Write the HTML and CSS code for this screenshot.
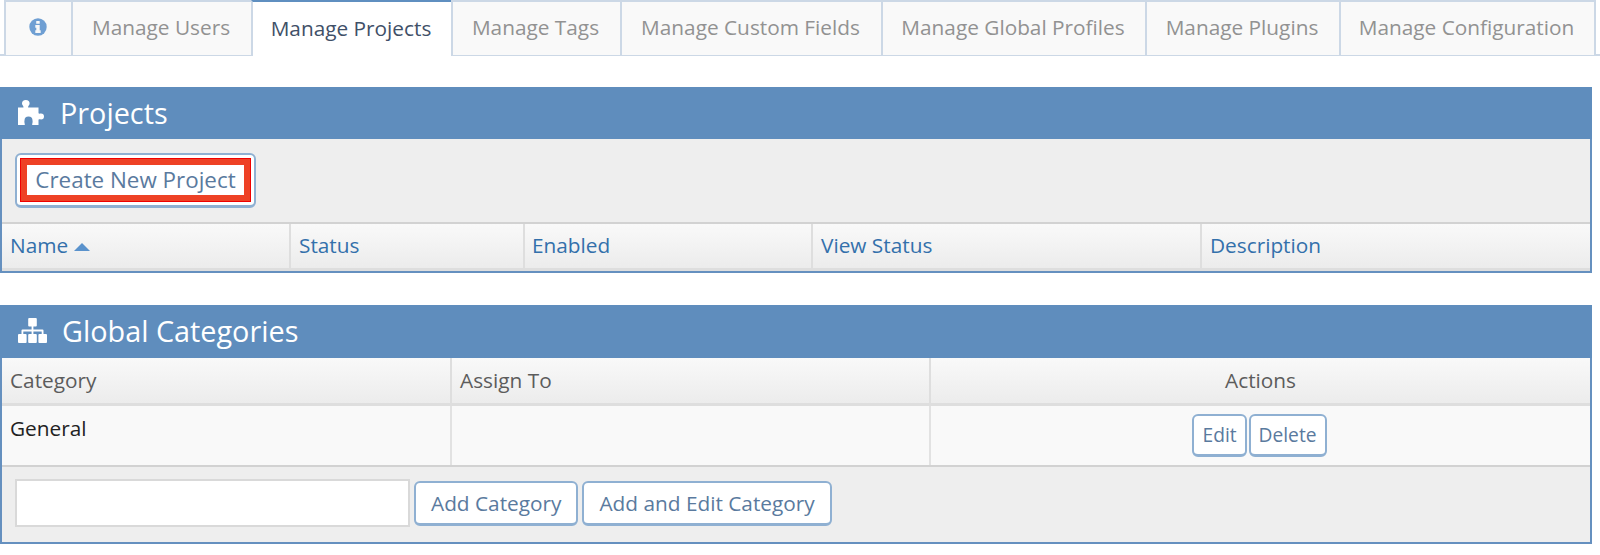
FILE: index.html
```html
<!DOCTYPE html>
<html lang="en">
<head>
<meta charset="utf-8">
<title>Manage Projects</title>
<link rel="stylesheet" href="styles.css">
</head>
<body>
<nav class="tabs">
  <a class="tab tab-info"><svg class="info-icon" viewBox="0 0 18 18"><circle cx="9" cy="9" r="8.7" fill="#6f9fd3"/><rect x="7.2" y="2.9" width="3.5" height="2.9" rx=".4" fill="#f8f8f8"/><path d="M6.3 7.1h4.4v5.2h1v2.6H6.3v-2.6h1V9.700h-1z" fill="#f8f8f8"/></svg></a>
  <a class="tab tab-users">Manage Users</a>
  <a class="tab tab-projects active">Manage Projects</a>
  <a class="tab tab-tags">Manage Tags</a>
  <a class="tab tab-fields">Manage Custom Fields</a>
  <a class="tab tab-profiles">Manage Global Profiles</a>
  <a class="tab tab-plugins">Manage Plugins</a>
  <a class="tab tab-config">Manage Configuration</a>
</nav>

<section class="panel panel-projects">
  <h2 class="panel-title"><svg class="puzzle-icon" viewBox="0 0 26 25"><path d="M0 7.500H5.500C5.800 6 4 5.200 4 3.500A3.800 3.500 0 1 1 11.600 3.500C11.600 5.200 9.800 6 10.100 7.500H20.500V13.200C21.300 14 22 13.500 23 13.500A3 3 0 1 1 23 19.500C22 19.500 21.300 19 20.500 19.800V25H14.200C14 23.500 15 22.500 14.500 20.500A4 4 0 0 0 6.500 20.500C6 22.500 7 23.500 6.800 25H0Z" fill="#fff"/></svg>Projects</h2>
  <div class="toolbar">
    <a class="btn btn-create"><span class="highlight"><span class="highlight-inner">Create New Project</span></span></a>
  </div>
  <table class="grid">
    <colgroup><col class="c-name"><col class="c-status"><col class="c-enabled"><col class="c-view"><col></colgroup>
    <thead>
      <tr class="head-row link-head">
        <th>Name <span class="sort-up"></span></th><th>Status</th><th>Enabled</th><th>View Status</th><th>Description</th>
      </tr>
    </thead>
  </table>
</section>

<section class="panel panel-categories">
  <h2 class="panel-title"><svg class="sitemap-icon" viewBox="0 0 29 25" fill="#fff"><rect x="10.200" width="8.600" height="8.500" rx="1"/><rect x="13.600" y="8" width="1.800" height="9"/><path d="M3.500 16.500V12.500a1 1 0 0 1 1-1h20a1 1 0 0 1 1 1v4h-1.800v-3H5.300v3z"/><rect y="16" width="8.600" height="9" rx="1"/><rect x="10.200" y="16" width="8.600" height="9" rx="1"/><rect x="20.400" y="16" width="8.600" height="9" rx="1"/></svg>Global Categories</h2>
  <table class="grid">
    <colgroup><col class="c-category"><col class="c-assign"><col></colgroup>
    <thead>
      <tr class="head-row">
        <th>Category</th><th>Assign To</th><th class="center">Actions</th>
      </tr>
    </thead>
    <tbody>
      <tr class="body-row">
        <td>General</td><td></td>
        <td class="center actions"><a class="btn btn-small">Edit</a><a class="btn btn-small">Delete</a></td>
      </tr>
    </tbody>
  </table>
  <form class="footer-bar">
    <input class="cat-input" type="text" aria-label="Category">
    <a class="btn btn-add">Add Category</a>
    <a class="btn btn-add">Add and Edit Category</a>
  </form>
</section>
</body>
</html>
```
FILE: styles.css
```css
* { box-sizing: border-box; }
html, body { margin: 0; padding: 0; background: #fff; }
body {
  width: 1600px;
  height: 555px;
  overflow: hidden;
  font-family: "Open Sans", "Noto Sans", sans-serif;
  font-size: 20.8px;
  color: #333;
}
.tabs {
  display: flex;
  height: 56px;
  padding-left: 4px;
  border-bottom: 2px solid #ccd8e6;
}
.tab {
  display: flex;
  align-items: center;
  justify-content: center;
  height: 55px;
  padding: 0 2px 3px 0;
  color: #929292;
  background: #f9f9f9;
  border: solid #ccd8e6;
  border-width: 2px 0 0 2px;
}
.tab-info { width: 67px; }
.tab-users { width: 180px; }
.tab-projects { width: 200px; }
.tab-tags { width: 169px; }
.tab-fields { width: 261px; }
.tab-profiles { width: 264px; }
.tab-plugins { width: 194px; }
.tab-config { width: 257px; border-right-width: 2px; }
.tab.active {
  height: 56px;
  color: #3f5068;
  background: #fff;
  border-top: 2px solid #5f8fc0;
  border-left-color: #ccd8e6;
}
.info-icon { width: 18px; height: 18px; }

.panel {
  width: 1592px;
  border: solid #6590bf;
  border-width: 0 2px 2px 2px;
}
.panel-projects { margin-top: 31px; }
.panel-categories { margin-top: 32px; }
.panel-title {
  display: flex;
  align-items: center;
  height: 52px;
  margin: 0 -2px;
  padding: 0 0 1px 18px;
  font-size: 28.800px;
  font-weight: 400;
  color: #fff;
  background: #5f8dbd;
}
.panel-categories .panel-title { height: 53px; }
.puzzle-icon { width: 26px; height: 25px; margin-right: 16px; }
.sitemap-icon { width: 29px; height: 25px; margin-right: 15px; }
.toolbar {
  display: flex;
  align-items: center;
  height: 83px;
  padding-left: 13px;
  background: #eee;
}
.btn {
  display: inline-flex;
  align-items: center;
  justify-content: center;
  color: #5a7a9e;
  background: #fff;
  border: 2px solid #8fb0d2;
  border-bottom-width: 3px;
  border-radius: 6px;
}
.btn-create {
  width: 241px;
  height: 55px;
  padding: 3px;
  font-size: 22.400px;
}
.highlight {
  display: flex;
  width: 100%;
  height: 100%;
  padding: 7px;
  background: #ee4125;
  box-shadow: inset 0 0 0 1px #f00000;
}
.highlight-inner {
  display: flex;
  align-items: center;
  justify-content: center;
  width: 100%;
  background: #fff;
  padding-bottom: 2px;
}
.grid {
  width: 100%;
  border-collapse: collapse;
  table-layout: fixed;
}
.c-name { width: 288px; }
.c-status { width: 234px; }
.c-enabled { width: 288px; }
.c-view { width: 389px; }
.c-category { width: 449px; }
.c-assign { width: 479px; }
.head-row th {
  height: 46px;
  padding: 0 0 1px 8px;
  font-size: 20.800px;
  font-weight: 400;
  text-align: left;
  color: #5c5c5c;
  background: linear-gradient(#f9f9f9, #ececec);
  border-top: 2px solid #d2d2d2;
  border-bottom: 3px solid #dedede;
  border-left: 2px solid #dedede;
}
.panel-categories .head-row th { border-top: 0; height: 47px; }
.head-row th:first-child { border-left: 0; }
.link-head th { color: #3370ab; }
.link-head th:nth-child(3) { padding-left: 7px; }
.head-row th.center { text-align: center; padding-left: 0; }
.center { text-align: center; }
.sort-up {
  display: inline-block;
  margin-left: 0;
  vertical-align: 2px;
  border: 8px solid transparent;
  border-top: 0;
  border-bottom: 8px solid #5a92cc;
}
.body-row td {
  height: 61px;
  padding: 0 0 14px 8px;
  color: #222;
  background: #f9f9f9;
  border-bottom: 2px solid #d2d2d2;
  border-left: 2px solid #e2e2e2;
}
.body-row td:first-child { border-left: 0; }
.body-row td.actions { padding: 0 2px 0 0; }
.btn-small { height: 43px; padding: 0 8px; font-size: 19.200px; }
.btn-small + .btn-small { margin-left: 2px; }
.footer-bar {
  display: flex;
  align-items: center;
  gap: 4px;
  height: 75px;
  padding: 0 0 2px 13px;
  background: #eee;
}
.cat-input {
  width: 395px;
  height: 48px;
  background: #fff;
  border: 2px solid #d9d9d9;
}
.btn-add { height: 45px; padding: 0 15px; font-size: 20.800px; }
```
